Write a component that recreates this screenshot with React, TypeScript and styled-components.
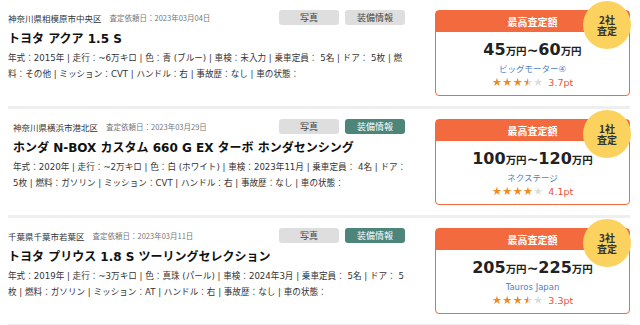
import React from "react";
import styled, { createGlobalStyle } from "styled-components";

const GlobalStyle = createGlobalStyle`
  * { box-sizing: border-box; }
  body {
    margin: 0;
    background: #fff;
    font-family: "DejaVu Sans", "Noto Sans CJK JP", sans-serif;
    color: #333;
  }
`;

type Offer = {
  location: string;
  date: string;
  title: string;
  spec: string;
  low: string;
  high: string;
  company: string;
  rating: string;
  stars: number;
  count: number;
  equipActive: boolean;
  inset?: boolean;
};

const offers: Offer[] = [
  {
    location: "神奈川県相模原市中央区",
    date: "2023年03月04日",
    title: "トヨタ アクア 1.5 S",
    spec: "年式：2015年 | 走行：~6万キロ | 色：青 (ブルー) | 車検：未入力 | 乗車定員： 5名 | ドア： 5枚 | 燃料：その他 | ミッション：CVT | ハンドル：右 | 事故歴：なし | 車の状態：",
    low: "45",
    high: "60",
    company: "ビッグモーター④",
    rating: "3.7pt",
    stars: 3.5,
    count: 2,
    equipActive: false,
  },
  {
    location: "神奈川県横浜市港北区",
    date: "2023年03月29日",
    title: "ホンダ N-BOX カスタム 660 G EX ターボ ホンダセンシング",
    spec: "年式：2020年 | 走行：~2万キロ | 色：白 (ホワイト) | 車検：2023年11月 | 乗車定員： 4名 | ドア： 5枚 | 燃料：ガソリン | ミッション：CVT | ハンドル：右 | 事故歴：なし | 車の状態：",
    low: "100",
    high: "120",
    company: "ネクステージ",
    rating: "4.1pt",
    stars: 4,
    count: 1,
    equipActive: true,
    inset: true,
  },
  {
    location: "千葉県千葉市若葉区",
    date: "2023年03月11日",
    title: "トヨタ プリウス 1.8 S ツーリングセレクション",
    spec: "年式：2019年 | 走行：~3万キロ | 色：真珠 (パール) | 車検：2024年3月 | 乗車定員： 5名 | ドア： 5枚 | 燃料：ガソリン | ミッション：AT | ハンドル：右 | 事故歴：なし | 車の状態：",
    low: "205",
    high: "225",
    company: "Tauros Japan",
    rating: "3.3pt",
    stars: 3.5,
    count: 3,
    equipActive: true,
  },
];

export default function App() {
  return (
    <>
      <GlobalStyle />
      <List>
        {offers.map((o) => (
          <Row key={o.location}>
            <Info $inset={o.inset}>
              <MetaBar>
                <Location>{o.location}</Location>
                <RequestDate>査定依頼日：{o.date}</RequestDate>
                <Buttons>
                  <TagButton>写真</TagButton>
                  <TagButton $active={o.equipActive}>装備情報</TagButton>
                </Buttons>
              </MetaBar>
              <Title>{o.title}</Title>
              <Spec>{o.spec}</Spec>
            </Info>
            <PriceCard>
              <CardHead>最高査定額</CardHead>
              <Badge>
                <BadgeLine>{o.count}社</BadgeLine>
                <BadgeLine>査定</BadgeLine>
              </Badge>
              <Price>
                <Num>{o.low}</Num>
                <Unit>万円</Unit>
                <Tilde>~</Tilde>
                <Num>{o.high}</Num>
                <Unit>万円</Unit>
              </Price>
              <Company>{o.company}</Company>
              <RatingLine>
                <Stars>
                  {[0, 1, 2, 3, 4].map((i) => (
                    <Star key={i} $fill={Math.max(0, Math.min(1, o.stars - i))}>
                      ★
                    </Star>
                  ))}
                </Stars>
                <Points>{o.rating}</Points>
              </RatingLine>
            </PriceCard>
          </Row>
        ))}
      </List>
    </>
  );
}

const List = styled.div`
  padding: 0 10px 0 8px;
  width: 640px;
`;

const Row = styled.div`
  display: flex;
  justify-content: space-between;
  padding: 10px 0 10px;
  border-bottom: 3px solid #efefef;
`;

const Info = styled.div<{ $inset?: boolean }>`
  width: 402px;
  padding-left: ${(p) => (p.$inset ? "5px" : "0")};
  display: flex;
  flex-direction: column;
`;

const MetaBar = styled.div`
  display: flex;
  align-items: center;
  height: 15px;
`;

const Location = styled.span`
  font-size: 8.5px;
  color: #333;
  font-family: "Noto Sans CJK JP", sans-serif;
`;

const RequestDate = styled.span`
  margin-left: 8px;
  font-size: 7.5px;
  color: #777;
  font-family: "Noto Sans CJK JP", sans-serif;
`;

const Buttons = styled.div`
  margin-left: auto;
  margin-right: 5px;
  display: flex;
  gap: 6px;
`;

const TagButton = styled.div<{ $active?: boolean }>`
  width: 60px;
  height: 15px;
  border-radius: 3px;
  display: flex;
  align-items: center;
  justify-content: center;
  font-size: 9px;
  font-family: "Noto Sans CJK JP", sans-serif;
  background: ${(p) => (p.$active ? "#4d857b" : "#dedede")};
  color: ${(p) => (p.$active ? "#fff" : "#444")};
`;

const Title = styled.div`
  margin-top: 6px;
  font-size: 12px;
  line-height: 16px;
  font-weight: bold;
  color: #111;
`;

const Spec = styled.div`
  margin-top: 3px;
  font-size: 8.6px;
  line-height: 16px;
  color: #333;
`;

const PriceCard = styled.div`
  position: relative;
  width: 195px;
  height: 86px;
  border: 1.5px solid #f26a3d;
  border-radius: 4px;
  display: flex;
  flex-direction: column;
  align-items: center;
`;

const CardHead = styled.div`
  align-self: stretch;
  height: 21px;
  background: #f26a3d;
  color: #fff;
  font-size: 10px;
  font-weight: bold;
  font-family: "Noto Sans CJK JP", sans-serif;
  display: flex;
  align-items: center;
  justify-content: center;
`;

const Badge = styled.div`
  position: absolute;
  top: -10px;
  right: -2px;
  width: 48px;
  height: 48px;
  border-radius: 50%;
  background: #fcd25e;
  color: #333;
  font-weight: bold;
  font-family: "Noto Sans CJK JP", sans-serif;
  display: flex;
  flex-direction: column;
  align-items: center;
  justify-content: center;
  text-align: center;
`;

const BadgeLine = styled.span`
  font-size: 10px;
  line-height: 11px;
`;

const Price = styled.div`
  margin-top: 9px;
  display: flex;
  align-items: baseline;
  color: #222;
  font-weight: bold;
  line-height: 18px;
`;

const Num = styled.span`
  font-size: 16px;
`;

const Unit = styled.span`
  font-size: 10.5px;
  font-family: "Noto Sans CJK JP", sans-serif;
`;

const Tilde = styled.span`
  font-size: 14px;
`;

const Company = styled.div`
  margin-top: 3px;
  font-size: 8.5px;
  line-height: 12px;
  color: #4f7fc4;
`;

const RatingLine = styled.div`
  margin-top: 1px;
  display: flex;
  align-items: center;
  gap: 5px;
`;

const Stars = styled.div`
  display: flex;
`;

const Star = styled.span<{ $fill: number }>`
  font-size: 11.5px;
  line-height: 13px;
  background: linear-gradient(
    90deg,
    #f08a1e ${(p) => p.$fill * 100}%,
    #dddddd ${(p) => p.$fill * 100}%
  );
  -webkit-background-clip: text;
  background-clip: text;
  color: transparent;
`;

const Points = styled.span`
  font-size: 9.5px;
  color: #e8553a;
`;
